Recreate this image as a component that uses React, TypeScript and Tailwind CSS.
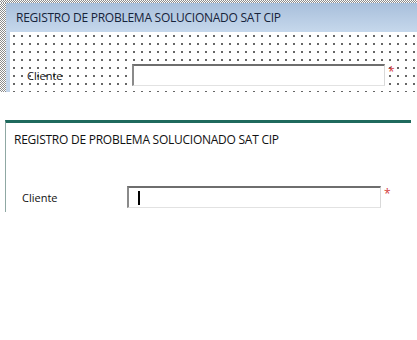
const TITLE = "REGISTRO DE PROBLEMA SOLUCIONADO SAT CIP";

function Hatch({className}: {className: string}) {
    return (
        <div className={`bg-[repeating-conic-gradient(#8c8c8c_0_25%,#ffffff_0_50%)] bg-[length:2px_2px] ${className}`}/>
    );
}

function SunkenField({caret}: {caret?: boolean}) {
    return (
        <div className="flex items-center h-full w-full bg-white border-t-2 border-l-2 border-t-[#6e6e6e] border-l-[#8a8a8a] border-r border-b border-r-[#d9d9d9] border-b-[#e2e2e2]">
            {caret && <div className="ml-[9px] w-[2px] h-[14px] bg-black"/>}
        </div>
    );
}

function Asterisk() {
    return <span className="text-[#d33a3a] text-[12px] leading-none ml-[3px] mt-[2px]">*</span>;
}

export default function App() {
    return (
        <div className="w-[417px] h-[340px] bg-white overflow-hidden font-['Open_Sans',sans-serif] text-[#1a1a1a]">
            {/* design view */}
            <div className="flex flex-col h-[92px]">
                <Hatch className="h-[3px] w-full"/>
                <div className="flex flex-1">
                    <Hatch className="w-[6px] h-full"/>
                    <div className="flex flex-col flex-1">
                        <div className="h-[29px] flex items-center pl-[10px] bg-gradient-to-b from-[#a8bfdb] to-[#c6d8ec] text-[12px] text-[#16233a] tracking-[-0.25px]">
                            {TITLE}
                        </div>
                        <div className="flex flex-1">
                            <div className="w-[4px] bg-[#c3d5ea]"/>
                            <div className="flex-1 bg-white bg-[radial-gradient(circle_at_1px_1px,#111111_0.7px,transparent_0.72px)] bg-[length:8px_8px] bg-[position:3px_3px] pt-[32px]">
                                <div className="flex items-start">
                                    <span className="ml-[17px] w-[105px] mt-[4px] text-[11px] text-[#111]">Cliente</span>
                                    <div className="w-[253px] h-[22px]"><SunkenField/></div>
                                    <Asterisk/>
                                </div>
                            </div>
                        </div>
                    </div>
                </div>
            </div>

            {/* runtime view */}
            <div className="mt-[28px] ml-[5px] w-[406px] h-[92px] border-t-[3px] border-t-[#1f6a5d] border-l border-l-[#8fa8a3]">
                <div className="pl-[8px] pt-[8px] text-[12px] text-[#111] tracking-[-0.25px]">{TITLE}</div>
                <div className="flex items-start mt-[37px]">
                    <span className="ml-[16px] w-[105px] mt-[4px] text-[11px] text-[#111]">Cliente</span>
                    <div className="w-[254px] h-[22px]"><SunkenField caret/></div>
                    <Asterisk/>
                </div>
            </div>
        </div>
    );
}
